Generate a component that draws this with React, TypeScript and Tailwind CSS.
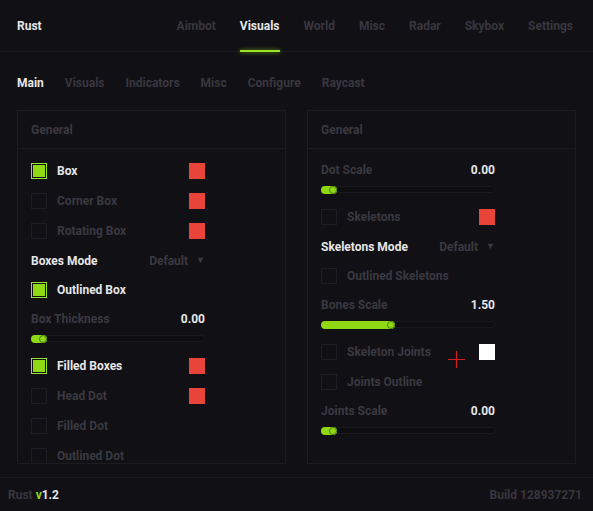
import React from "react";

const GREEN = "bg-[#8fd914]";

type Row =
  | { kind: "check"; label: string; on?: boolean; swatch?: string; cursor?: boolean }
  | { kind: "mode"; label: string; value: string }
  | { kind: "slider"; label: string; value: string; pct: number };

const leftRows: Row[] = [
  { kind: "check", label: "Box", on: true, swatch: "bg-[#e8443a]" },
  { kind: "check", label: "Corner Box", swatch: "bg-[#e8443a]" },
  { kind: "check", label: "Rotating Box", swatch: "bg-[#e8443a]" },
  { kind: "mode", label: "Boxes Mode", value: "Default" },
  { kind: "check", label: "Outlined Box", on: true },
  { kind: "slider", label: "Box Thickness", value: "0.00", pct: 0 },
  { kind: "check", label: "Filled Boxes", on: true, swatch: "bg-[#e8443a]" },
  { kind: "check", label: "Head Dot", swatch: "bg-[#e8443a]" },
  { kind: "check", label: "Filled Dot" },
  { kind: "check", label: "Outlined Dot" },
];

const rightRows: Row[] = [
  { kind: "slider", label: "Dot Scale", value: "0.00", pct: 0 },
  { kind: "check", label: "Skeletons", swatch: "bg-[#e8443a]" },
  { kind: "mode", label: "Skeletons Mode", value: "Default" },
  { kind: "check", label: "Outlined Skeletons" },
  { kind: "slider", label: "Bones Scale", value: "1.50", pct: 34 },
  { kind: "check", label: "Skeleton Joints", swatch: "bg-white", cursor: true },
  { kind: "check", label: "Joints Outline" },
  { kind: "slider", label: "Joints Scale", value: "0.00", pct: 0 },
];

function Checkbox({ on }: { on?: boolean }) {
  if (on) {
    return (
      <div className="w-4 h-4 border border-[#9be326] p-[1px] bg-[#111014]">
        <div className={`w-full h-full ${GREEN}`} />
      </div>
    );
  }
  return <div className="w-4 h-4 border border-[#1e1d23]" />;
}

function Slider({ pct }: { pct: number }) {
  return (
    <div className="relative h-[7px] w-[174px] rounded-full border border-[#1a191e] bg-[#0e0d10]">
      <div
        className={`absolute left-[-1px] top-[-1px] h-[8px] rounded-full ${GREEN}`}
        style={{ width: `calc(${pct}% + 16px)` }}
      >
        <div className="absolute right-0 top-0 w-[8px] h-[8px] rounded-full bg-[#8fd914] border border-[#4d7a0c]" />
      </div>
    </div>
  );
}

function RowView({ row }: { row: Row }) {
  if (row.kind === "slider") {
    return (
      <div className="pb-[9px]">
        <div className="flex items-center justify-between w-[174px] h-[28px]">
          <span className="text-[#3a3941]">{row.label}</span>
          <span className="text-[#e6e6e8]">{row.value}</span>
        </div>
        <div className="mt-[2px]">
          <Slider pct={row.pct} />
        </div>
      </div>
    );
  }
  if (row.kind === "mode") {
    return (
      <div className="flex items-center h-[29px] w-[174px]">
        <span className="text-[#e6e6e8] w-[120px]">{row.label}</span>
        <span className="text-[#3a3941] flex items-center gap-[8px]">
          {row.value}
          <span className="text-[9px]">▼</span>
        </span>
      </div>
    );
  }
  return (
    <div className="relative flex items-center h-[30px] w-[174px]">
      <Checkbox on={row.on} />
      <span className={`ml-[10px] flex-1 ${row.on ? "text-[#e6e6e8]" : "text-[#3a3941]"}`}>
        {row.label}
      </span>
      {row.swatch && <div className={`w-4 h-4 ${row.swatch}`} />}
      {row.cursor && (
        <svg className="absolute left-[127px] top-[14px]" width="17" height="17" viewBox="0 0 17 17">
          <path d="M8.5 0v17M0 8.5h17" stroke="#d11f24" strokeWidth="1.2" />
        </svg>
      )}
    </div>
  );
}

function Panel({ rows }: { rows: Row[] }) {
  return (
    <div className="flex-1 h-[354px] border border-[#1c1b20] overflow-hidden">
      <div className="h-[38px] flex items-center px-[13px] border-b border-[#1c1b20] text-[#3a3941]">
        General
      </div>
      <div className="px-[13px] pt-[7px]">
        {rows.map((r) => (
          <RowView key={r.label} row={r} />
        ))}
      </div>
    </div>
  );
}

export default function App() {
  const tabs = ["Aimbot", "Visuals", "World", "Misc", "Radar", "Skybox", "Settings"];
  const subTabs = ["Main", "Visuals", "Indicators", "Misc", "Configure", "Raycast"];
  return (
    <div
      className="w-[593px] h-[511px] bg-[#111014] flex flex-col text-[12px] font-bold overflow-hidden"
      style={{ fontFamily: "Roboto, 'Liberation Sans', sans-serif" }}
    >
      <div className="h-[52px] flex items-center pl-[17px] pr-[20px] border-b border-[#1a191e]">
        <span className="text-[#e6e6e8]">Rust</span>
        <div className="ml-auto flex gap-[24px] h-full">
          {tabs.map((t) => (
            <div key={t} className="relative flex items-center h-full">
              <span className={t === "Visuals" ? "text-[#e6e6e8]" : "text-[#38373f]"}>{t}</span>
              {t === "Visuals" && (
                <div className="absolute left-0 right-0 bottom-[-1px] h-[2px] bg-[#9be326] shadow-[0_0_4px_#6fa81a]" />
              )}
            </div>
          ))}
        </div>
      </div>
      <div className="h-[58px] flex items-center gap-[21px] pl-[17px] pt-[4px]">
        {subTabs.map((t) => (
          <span key={t} className={t === "Main" ? "text-[#e6e6e8]" : "text-[#38373f]"}>
            {t}
          </span>
        ))}
      </div>
      <div className="flex gap-[21px] px-[17px]">
        <Panel rows={leftRows} />
        <Panel rows={rightRows} />
      </div>
      <div className="mt-auto h-[34px] border-t border-[#1a191e] flex items-center justify-between pl-[8px] pr-[11px]">
        <span>
          <span className="text-[#38373f]">Rust </span>
          <span className="text-[#8fd914]">v</span>
          <span className="text-[#e6e6e8]">1.2</span>
        </span>
        <span className="text-[#38373f]">Build 128937271</span>
      </div>
    </div>
  );
}
